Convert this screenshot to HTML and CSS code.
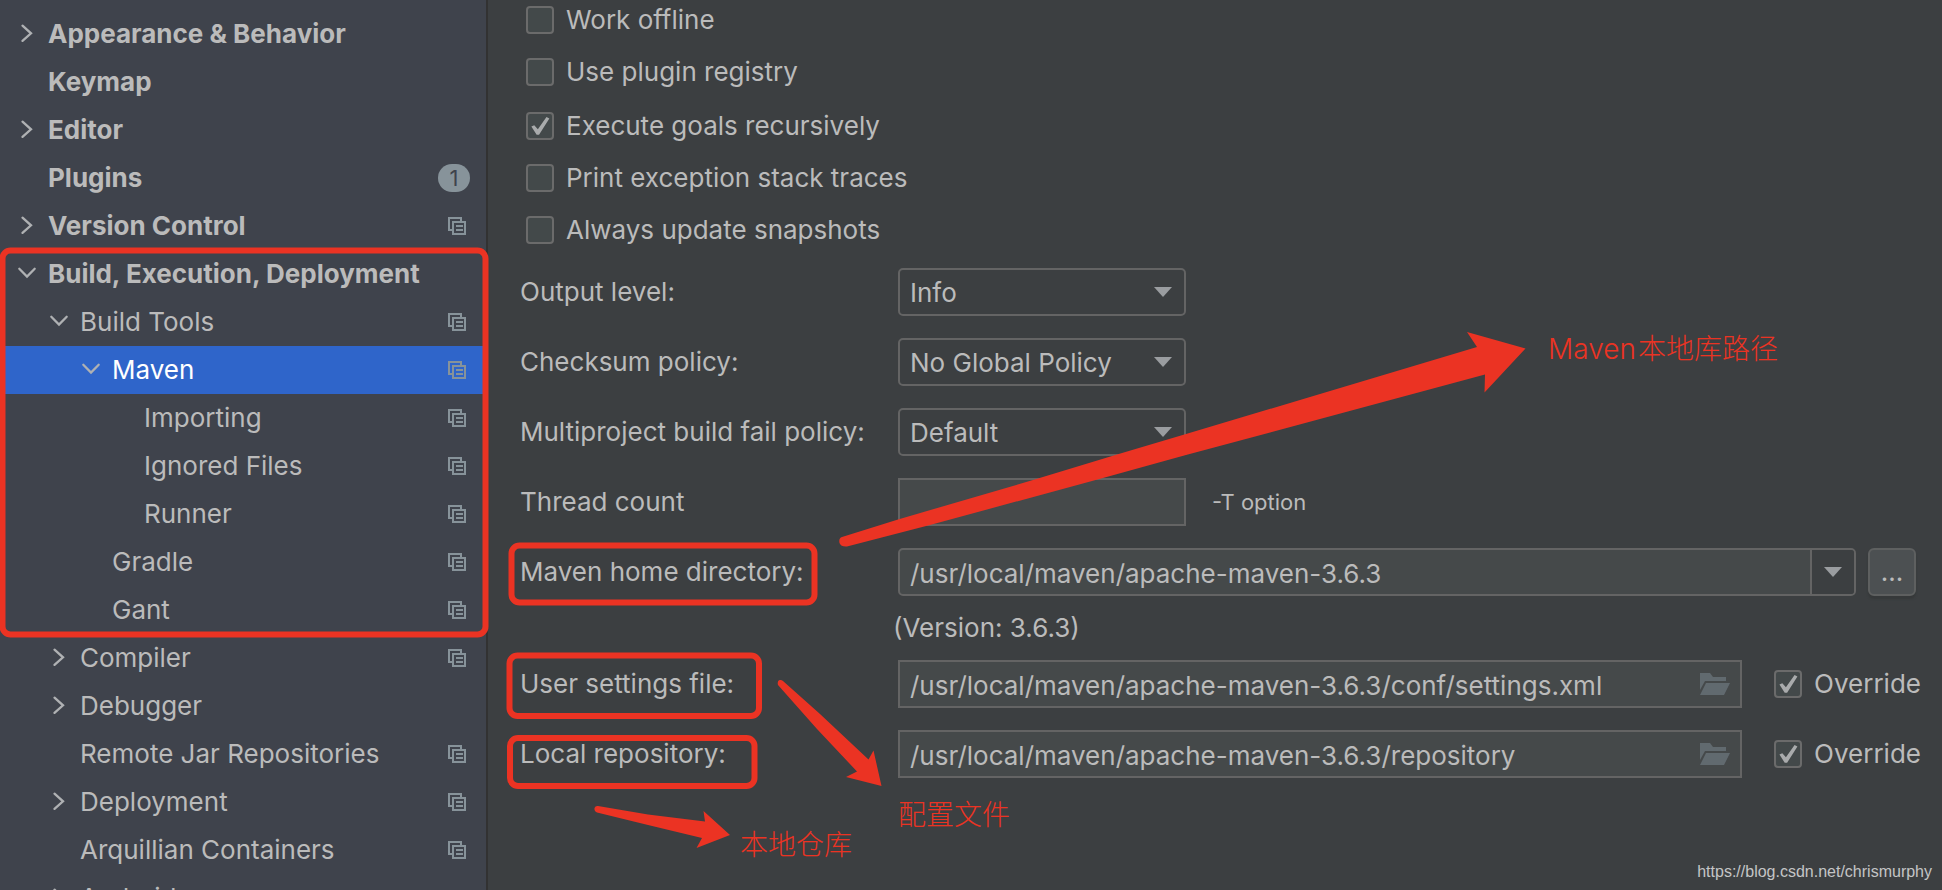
FILE: index.html
```html
<!DOCTYPE html>
<html lang="en">
<head>
<meta charset="utf-8">
<title>Maven settings</title>
<link rel="stylesheet" href="styles.css">
</head>
<body>
<svg class="defs" aria-hidden="true">
  <symbol id="right" viewBox="0 0 24 24"><path d="M8.500 3.700L17 11.300 8.500 18.900" fill="none" stroke="#afb1b3" stroke-width="2.300" stroke-linecap="round"/></symbol>
  <symbol id="down" viewBox="0 0 24 24"><path d="M5.300 6.700L13 14.500l7.700-7.800" fill="none" stroke="#afb1b3" stroke-width="2.300" stroke-linecap="round"/></symbol>
  <symbol id="copy" viewBox="0 0 18 18"><path d="M13 4V1H1v12h3M5 5h12v12H5zM8 9h7M8 13h7" fill="none" stroke="currentColor" stroke-width="2"/></symbol>
  <symbol id="tri" viewBox="0 0 18 10"><path d="M0 0h18L9 10z" fill="#9a9da0"/></symbol>
  <symbol id="folder" viewBox="0 0 30 22"><path d="M0 0h10l3 4h13v4H5L0 17zM6 10h24l-6 12H0z" fill="#616a6f"/></symbol>
</svg>
<div class="window">
  <nav class="sidebar" aria-label="Settings">
    <a class="item top" href="#"><svg class="chev"><use href="#right"/></svg><span class="name">Appearance &amp; Behavior</span></a>
    <a class="item top" href="#"><span class="chev"></span><span class="name">Keymap</span></a>
    <a class="item top" href="#"><svg class="chev"><use href="#right"/></svg><span class="name">Editor</span></a>
    <a class="item top" href="#"><span class="chev"></span><span class="name">Plugins</span><span class="count">1</span></a>
    <a class="item top" href="#"><svg class="chev"><use href="#right"/></svg><span class="name">Version Control</span><svg class="copy"><use href="#copy"/></svg></a>
    <a class="item top" href="#"><svg class="chev"><use href="#down"/></svg><span class="name">Build, Execution, Deployment</span></a>
    <a class="item l1" href="#"><svg class="chev"><use href="#down"/></svg><span class="name">Build Tools</span><svg class="copy"><use href="#copy"/></svg></a>
    <a class="item l2 selected" href="#" aria-current="page"><svg class="chev"><use href="#down"/></svg><span class="name">Maven</span><svg class="copy"><use href="#copy"/></svg></a>
    <a class="item l3" href="#"><span class="chev"></span><span class="name">Importing</span><svg class="copy"><use href="#copy"/></svg></a>
    <a class="item l3" href="#"><span class="chev"></span><span class="name">Ignored Files</span><svg class="copy"><use href="#copy"/></svg></a>
    <a class="item l3" href="#"><span class="chev"></span><span class="name">Runner</span><svg class="copy"><use href="#copy"/></svg></a>
    <a class="item l2" href="#"><span class="chev"></span><span class="name">Gradle</span><svg class="copy"><use href="#copy"/></svg></a>
    <a class="item l2" href="#"><span class="chev"></span><span class="name">Gant</span><svg class="copy"><use href="#copy"/></svg></a>
    <a class="item l1" href="#"><svg class="chev"><use href="#right"/></svg><span class="name">Compiler</span><svg class="copy"><use href="#copy"/></svg></a>
    <a class="item l1" href="#"><svg class="chev"><use href="#right"/></svg><span class="name">Debugger</span></a>
    <a class="item l1" href="#"><span class="chev"></span><span class="name">Remote Jar Repositories</span><svg class="copy"><use href="#copy"/></svg></a>
    <a class="item l1" href="#"><svg class="chev"><use href="#right"/></svg><span class="name">Deployment</span><svg class="copy"><use href="#copy"/></svg></a>
    <a class="item l1" href="#"><span class="chev"></span><span class="name">Arquillian Containers</span><svg class="copy"><use href="#copy"/></svg></a>
    <a class="item l1" href="#"><svg class="chev"><use href="#right"/></svg><span class="name">Android</span></a>
  </nav>

  <main class="panel">
    <div class="checks">
      <div class="group">
        <label class="check"><input type="checkbox">Work offline</label>
        <label class="check"><input type="checkbox">Use plugin registry</label>
      </div>
      <div class="group">
        <label class="check"><input type="checkbox" checked>Execute goals recursively</label>
        <label class="check"><input type="checkbox">Print exception stack traces</label>
        <label class="check"><input type="checkbox">Always update snapshots</label>
      </div>
    </div>

    <div class="form">
      <label for="level">Output level:</label>
      <div class="row"><div class="select"><select id="level"><option>Info</option></select><svg class="tri"><use href="#tri"/></svg></div></div>

      <label for="checksum">Checksum policy:</label>
      <div class="row"><div class="select"><select id="checksum"><option>No Global Policy</option></select><svg class="tri"><use href="#tri"/></svg></div></div>

      <label for="fail">Multiproject build fail policy:</label>
      <div class="row"><div class="select"><select id="fail"><option>Default</option></select><svg class="tri"><use href="#tri"/></svg></div></div>

      <label for="threads">Thread count</label>
      <div class="row"><div class="field short"><input id="threads" type="text"></div><span class="hint">-T option</span></div>

      <label for="home">Maven home directory:</label>
      <div class="row home">
        <div class="field combo"><input id="home" type="text" value="/usr/local/maven/apache-maven-3.6.3"><button class="drop" type="button" aria-label="Show list"><svg class="tri"><use href="#tri"/></svg></button></div>
        <button class="more" type="button">...</button>
      </div>
    </div>

    <p class="version">(Version: 3.6.3)</p>

    <div class="form">
      <label for="settings">User settings file:</label>
      <div class="row files">
        <div class="field"><input id="settings" type="text" value="/usr/local/maven/apache-maven-3.6.3/conf/settings.xml"><button class="browse" type="button" aria-label="Browse"><svg class="folder"><use href="#folder"/></svg></button></div>
        <label class="check override"><input type="checkbox" checked>Override</label>
      </div>

      <label for="repo">Local repository:</label>
      <div class="row files">
        <div class="field"><input id="repo" type="text" value="/usr/local/maven/apache-maven-3.6.3/repository"><button class="browse" type="button" aria-label="Browse"><svg class="folder"><use href="#folder"/></svg></button></div>
        <label class="check override"><input type="checkbox" checked>Override</label>
      </div>
    </div>
  </main>
</div>

<div class="notes">
  <svg class="marks" aria-hidden="true">
    <g fill="none" stroke="#eb3323" stroke-width="6">
      <rect x="2.500" y="250.500" width="483" height="384" rx="8"/>
      <rect x="511.500" y="545.500" width="303" height="57" rx="8"/>
      <rect x="509.500" y="655.500" width="249.500" height="60.500" rx="8"/>
      <rect x="510" y="738" width="244.500" height="48" rx="8"/>
    </g>
    <g fill="#eb3323">
      <path d="M842 537L898 519.500L1033 480L1117 454.500L1186 434L1320 394L1477 347L1467 332L1525.500 348.500L1484.500 392.500L1485 374.500L1320 419L1186 455L1103 478L930 525L847 546.500Q841 547 839.500 543Q838.500 538 842 537Z"/>
      <path d="M783 681L820 714L868.500 759.500L873.500 750.500L881.500 786L846 777L857 771.500L817 729L778 685Q777 681 779.500 680Q781.500 679.500 783 681Z"/>
      <path d="M598 806L648 814.500L705 821.500L703.500 811L730 835L696.500 848L702 838L648 825L597 812.500Q594 811 594.500 808Q595.500 805.500 598 806Z"/>
    </g>
  </svg>
  <span class="note path">Maven<span class="cjk">本地库路径</span></span>
  <span class="note config">配置文件</span>
  <span class="note repo">本地仓库</span>
  <span class="source">https://blog.csdn.net/chrismurphy</span>
</div>
</body>
</html>
```

FILE: styles.css
```css
* { box-sizing: border-box; }

body {
  margin: 0;
  height: 100vh;
  overflow: hidden;
  position: relative;
  background: #3c3f41;
  color: #bbbbbb;
  font: 26px/32px Inter, "Noto Sans CJK SC", sans-serif;
}

.defs { display: none; }

.window {
  display: flex;
  height: 100%;
  overflow: hidden;
}

/* Settings tree */
.sidebar {
  flex: 0 0 488px;
  padding-top: 10px;
  background: #3f434c;
  border-right: 2px solid #323232;
}
.item {
  display: flex;
  align-items: center;
  gap: 10px;
  height: 48px;
  padding: 0 20px 0 14px;
  color: inherit;
  text-decoration: none;
  white-space: nowrap;
}
.item.top { font-weight: 700; }
.item.l1 { padding-left: 46px; }
.item.l2 { padding-left: 78px; }
.item.l3 { padding-left: 110px; }
.item.selected { background: #2f65ca; color: #ffffff; }
.name { flex: 1; }
.chev { flex: none; width: 24px; height: 24px; }
.copy { flex: none; width: 18px; height: 18px; color: #87939a; }
.count {
  width: 32px;
  margin-right: -4px;
  border-radius: 14px;
  background: #87939a;
  color: #3f434c;
  font-size: 22px;
  font-weight: 400;
  line-height: 28px;
  text-align: center;
}

/* Maven page */
.panel { flex: 1; min-width: 0; padding: 6px 21px 0 32px; }
.checks {
  display: flex;
  flex-direction: column;
  gap: 26px;
  margin: 0 0 24px 6px;
}
.group { display: flex; flex-direction: column; gap: 24px; }
.check {
  display: flex;
  align-items: center;
  gap: 12px;
  height: 28px;
  line-height: 34px;
  white-space: nowrap;
}
.check input {
  appearance: none;
  flex: none;
  width: 28px;
  height: 28px;
  margin: 0;
  border: 2px solid #6b6b6b;
  border-radius: 4px;
  background: #43494a;
}
.check input:checked::before {
  content: "";
  display: block;
  width: 24px;
  height: 24px;
  background: #a9abac;
  clip-path: polygon(14% 52%, 26% 47%, 41% 64%, 77% 12%, 89% 19%, 46% 86%, 36% 86%);
}

.form {
  display: grid;
  grid-template-columns: 378px 1fr;
  row-gap: 22px;
  align-items: center;
}
.row { display: flex; align-items: center; }
.select, .field {
  display: flex;
  align-items: center;
  height: 48px;
  border: 2px solid #646464;
}
.select { position: relative; width: 288px; border-radius: 5px; }
.select select {
  appearance: none;
  width: 100%;
  height: 100%;
  padding: 2px 40px 0 10px;
  border: 0;
  background: transparent;
  color: inherit;
  font: inherit;
}
.tri { flex: none; width: 18px; height: 10px; }
.select .tri { position: absolute; right: 12px; pointer-events: none; }

.field { flex: 1; min-width: 0; background: #45494a; }
.field.short { flex: 0 0 288px; }
.field input {
  flex: 1;
  min-width: 0;
  height: 100%;
  padding: 2px 0 0 10px;
  border: 0;
  background: transparent;
  color: inherit;
  font: inherit;
}
.field.combo { border-radius: 5px; overflow: hidden; }
.drop {
  display: grid;
  place-items: center;
  width: 44px;
  height: 100%;
  padding: 0;
  border: 0;
  border-left: 2px solid #646464;
  background: #3c3f41;
}
.hint { margin-left: 26px; font-size: 22px; }
.home { gap: 12px; padding-right: 5px; }
.more {
  width: 48px;
  height: 48px;
  padding: 0;
  border: 2px solid #5e6060;
  border-radius: 6px;
  background: #4c5052;
  box-shadow: 0 3px 2px #36393a;
  color: inherit;
  font: inherit;
}
.version {
  margin: 0 0 0 373px;
  line-height: 64px;
}
.files { gap: 32px; }
.browse {
  display: grid;
  place-items: center;
  width: 50px;
  height: 100%;
  padding: 0;
  border: 0;
  background: transparent;
}
.folder { width: 30px; height: 22px; }
.override { flex: 0 0 146px; }

/* Hand-drawn marks over the window */
.notes {
  position: absolute;
  inset: 0;
  color: #eb3323;
  pointer-events: none;
}
.marks { display: block; width: 100%; height: 100%; }
.note {
  position: absolute;
  font-size: 28px;
  line-height: 40px;
  font-weight: 300;
  white-space: nowrap;
}
.path { left: 1548px; top: 329px; }
.cjk { margin-left: 2px; }
.config { left: 898px; top: 795px; }
.repo { left: 740px; top: 825px; }
.source {
  position: absolute;
  right: 10px;
  bottom: 8px;
  color: #c4c5c6;
  font: 16px/20px "Liberation Sans", Arial, sans-serif;
}
```
